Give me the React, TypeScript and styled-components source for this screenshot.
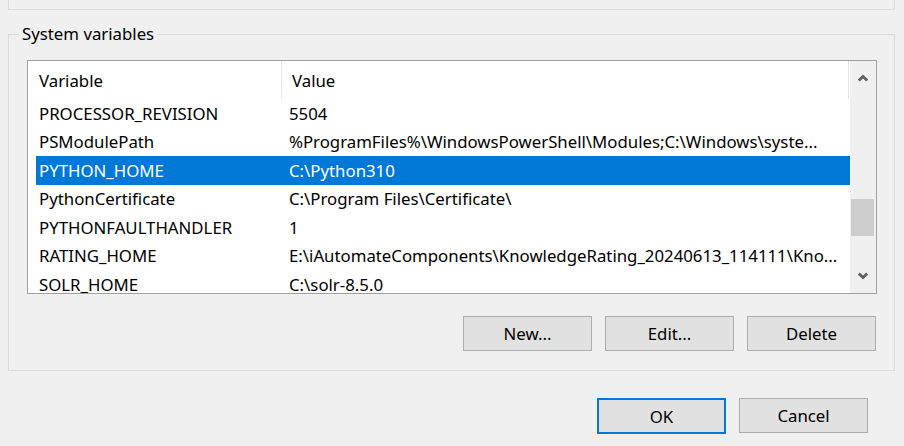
import React from 'react';
import { createGlobalStyle, styled } from 'styled-components';

type Row = { name: string; value: string; selected?: boolean };

const rows: Row[] = [
  { name: 'PROCESSOR_REVISION', value: '5504' },
  { name: 'PSModulePath', value: '%ProgramFiles%\\WindowsPowerShell\\Modules;C:\\Windows\\syste...' },
  { name: 'PYTHON_HOME', value: 'C:\\Python310', selected: true },
  { name: 'PythonCertificate', value: 'C:\\Program Files\\Certificate\\' },
  { name: 'PYTHONFAULTHANDLER', value: '1' },
  { name: 'RATING_HOME', value: 'E:\\iAutomateComponents\\KnowledgeRating_20240613_114111\\Kno...' },
  { name: 'SOLR_HOME', value: 'C:\\solr-8.5.0' },
];

const GlobalStyle = createGlobalStyle`
  html, body {
    margin: 0;
    padding: 0;
    background: #f0f0f0;
    font-family: "Noto Sans", "Open Sans", sans-serif;
    font-size: 16.8px;
    color: #000;
  }
`;

const Page = styled.div`
  width: 904px;
  height: 446px;
  overflow: hidden;
  display: flex;
  flex-direction: column;
`;

const TopGroup = styled.div`
  height: 9px;
  margin: 0 9px 0 8px;
  border: 1px solid #dcdcdc;
  border-top: none;
`;

const Group = styled.fieldset`
  margin: 13px 9px 0 8px;
  padding: 0 17px 19px 18px;
  border: 1px solid #dcdcdc;
  min-width: 0;
  display: flex;
  flex-direction: column;
`;

const Legend = styled.legend`
  margin-left: -8px;
  padding: 0 3px;
  line-height: 22px;
`;

const ListView = styled.div`
  margin-top: 15px;
  height: 232px;
  border: 1px solid #a0a0a0;
  background: #fff;
  display: flex;
  overflow: hidden;
`;

const ListBody = styled.div`
  flex: 1;
  min-width: 0;
  overflow: hidden;
`;

const Header = styled.div`
  height: 38px;
  display: grid;
  grid-template-columns: 253px 1fr;
  border-right: 1px solid #e5e5e5;
  margin-right: 1px;
`;

const HeaderCell = styled.div<{ $first?: boolean }>`
  display: flex;
  align-items: center;
  padding-left: ${(p) => (p.$first ? '11px' : '10px')};
  border-left: ${(p) => (p.$first ? 'none' : '1px solid #e5e5e5')};
  white-space: nowrap;
`;

const ItemRow = styled.div<{ $selected?: boolean }>`
  height: 28.5px;
  margin-left: 8px;
  display: grid;
  grid-template-columns: 253px 1fr;
  align-items: center;
  background: ${(p) => (p.$selected ? '#0078d7' : 'transparent')};
  color: ${(p) => (p.$selected ? '#fff' : '#000')};
`;

const Cell = styled.div<{ $first?: boolean }>`
  padding-left: ${(p) => (p.$first ? '3px' : '0')};
  white-space: nowrap;
  overflow: hidden;
`;

const ScrollBar = styled.div`
  width: 26px;
  background: #f0f0f0;
  display: flex;
  flex-direction: column;
  align-items: center;
`;

const Arrow = styled.div`
  height: 34px;
  width: 100%;
  display: flex;
  align-items: center;
  justify-content: center;
`;

const Track = styled.div`
  flex: 1;
  width: 100%;
  padding: 104px 2px 0 1px;
  box-sizing: border-box;
`;

const Thumb = styled.div`
  height: 37px;
  background: #cdcdcd;
`;

const ButtonRow = styled.div<{ $right: number; $top: number }>`
  display: flex;
  justify-content: flex-end;
  gap: 13px;
  margin-top: ${(p) => p.$top}px;
  margin-right: ${(p) => p.$right}px;
`;

const Button = styled.button<{ $default?: boolean }>`
  width: 129px;
  height: ${(p) => (p.$default ? '36px' : '35px')};
  box-sizing: border-box;
  background: #e1e1e1;
  border: ${(p) => (p.$default ? '2px solid #0078d7' : '1px solid #adadad')};
  font-family: inherit;
  font-size: 16.8px;
  color: #000;
  padding: 0;
`;

const Chevron = ({ up }: { up?: boolean }) => (
  <svg width="12" height="8" viewBox="0 0 12 8">
    <path
      d={up ? 'M1.8 6.6 L6 2.4 L10.2 6.6' : 'M1.8 1.4 L6 5.6 L10.2 1.4'}
      fill="none"
      stroke="#606060"
      strokeWidth="2.8"
    />
  </svg>
);

export default function App() {
  return (
    <Page>
      <GlobalStyle />
      <TopGroup />
      <Group>
        <Legend>System variables</Legend>
        <ListView>
          <ListBody>
            <Header>
              <HeaderCell $first>Variable</HeaderCell>
              <HeaderCell>Value</HeaderCell>
            </Header>
            {rows.map((r) => (
              <ItemRow key={r.name} $selected={r.selected}>
                <Cell $first>{r.name}</Cell>
                <Cell>{r.value}</Cell>
              </ItemRow>
            ))}
          </ListBody>
          <ScrollBar>
            <Arrow>
              <Chevron up />
            </Arrow>
            <Track>
              <Thumb />
            </Track>
            <Arrow>
              <Chevron />
            </Arrow>
          </ScrollBar>
        </ListView>
        <ButtonRow $right={1} $top={22}>
          <Button>New...</Button>
          <Button>Edit...</Button>
          <Button>Delete</Button>
        </ButtonRow>
      </Group>
      <ButtonRow $right={36} $top={27}>
        <Button $default>OK</Button>
        <Button>Cancel</Button>
      </ButtonRow>
    </Page>
  );
}
